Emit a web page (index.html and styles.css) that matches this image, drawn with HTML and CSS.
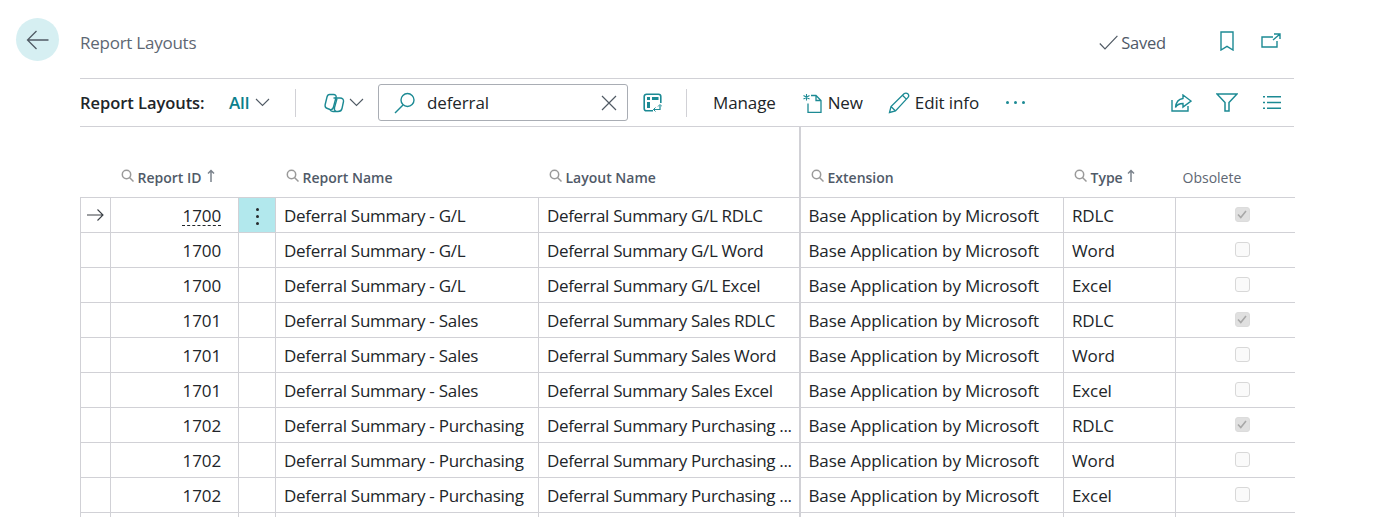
FILE: index.html
```html
<!DOCTYPE html>
<html lang="en">
<head>
<meta charset="utf-8">
<title>Report Layouts</title>
<link rel="stylesheet" href="styles.css">
</head>
<body>
<div class="page">
  <div class="back-col">
    <button class="back" aria-label="Back">
      <svg width="24" height="20" viewBox="0 0 24 20" fill="none" stroke="#505a64" stroke-width="1.3"><path d="M1.500 10H22.500M10.500 1 1.500 10l9 9"/></svg>
    </button>
  </div>
  <main class="main">
    <header class="title-bar">
      <div class="title">Report Layouts</div>
      <div class="status">
        <svg width="19" height="15" viewBox="0 0 19 15" fill="none" stroke="#505a64" stroke-width="1.200"><path d="M.8 8.500 6 13.800 18.400.8"/></svg>
        <span>Saved</span>
      </div>
      <svg class="bookmark" width="14" height="20" viewBox="0 0 14 20" fill="none" stroke="#1c8a94" stroke-width="1.400"><path d="M1 1h12v18l-6-3.600L1 19z"/></svg>
      <svg class="popout" width="20" height="15" viewBox="0 0 20 15" fill="none" stroke="#1c8a94" stroke-width="1.400"><path d="M12 4H1v10h15V8M13 1h6v5M19 1l-7 6"/></svg>
    </header>
    <div class="toolbar">
      <span class="view-label">Report Layouts:</span>
      <span class="view-all">All</span>
      <svg class="chev" width="15" height="9" viewBox="0 0 15 9" fill="none" stroke="#505a64" stroke-width="1.100"><path d="M1 1l6.500 6.500L14 1"/></svg>
      <span class="sep sep-a"></span>
      <svg class="copilot" width="21" height="20" viewBox="0 0 21 20" fill="none" stroke="#1c8a94" stroke-width="1.400"><path d="M5.500 1.500h4c2 0 3 1.200 2.500 3L9.500 14c-.5 2-1.500 3-3.500 2.500l-2.500-1C1.500 15 .8 13.500 1.200 11.500L3 4c.4-1.700 1.200-2.500 2.500-2.500z"/><path d="M9.500 5h6.500c2.500 0 3.800 1.500 3.500 3.500l-1.500 7c-.4 2-1.800 3-4 3H9c-1.500 0-2.500-.6-3-2"/><path d="M13 5.500l-2.500 9c-.4 1.500-.2 3 1.500 4"/></svg>
      <svg class="chev chev-b" width="15" height="9" viewBox="0 0 15 9" fill="none" stroke="#505a64" stroke-width="1.100"><path d="M1 1l6.500 6.500L14 1"/></svg>
      <div class="search">
        <svg class="search-ico" width="22" height="22" viewBox="0 0 22 22" fill="none" stroke="#1c8a94" stroke-width="1.400"><circle cx="13.500" cy="8" r="6.500"/><path d="M9 13 1 21"/></svg>
        <span class="search-text">deferral</span>
        <svg class="clear" width="16" height="16" viewBox="0 0 16 16" fill="none" stroke="#505a64" stroke-width="1.200"><path d="M1 1l14 14M15 1 1 15"/></svg>
      </div>
      <svg class="layout-ico" width="19" height="19" viewBox="0 0 19 19" fill="none" stroke="#1c8a94" stroke-width="1.600"><path d="M10 17.800H3.500a2.300 2.300 0 0 1-2.300-2.300v-12a2.300 2.300 0 0 1 2.300-2.300h12a2.300 2.300 0 0 1 2.300 2.300V10"/><path d="M4 4h3v3H4zM9 4h6.500v3H9zM4 9h3v6H4z" fill="#1c8a94" stroke="none"/><path d="M10.500 16.500h6.500v-4" stroke-width="1.200"/><path d="M12.500 14.500l-2 2 2 2M15 13.500l2-2 2 2" stroke-width="1"/></svg>
      <span class="sep sep-b"></span>
      <span class="action act-manage">Manage</span>
      <span class="action act-new">
        <svg width="20" height="20" viewBox="0 0 20 20" fill="none" stroke="#1c8a94" stroke-width="1.300"><path d="M9 2.500h5l5 5v12H6v-9M14 2.500v5h5"/><path d="M4.500 1v6.500M1.500 2.500l6 3.500M7.500 2.500l-6 3.500" stroke-width="1.100"/></svg>
        New
      </span>
      <span class="action act-edit">
        <svg width="22" height="22" viewBox="0 0 22 22" fill="none" stroke="#1c8a94" stroke-width="1.300"><path d="M1.500 20.500l1.500-6L16 1.800c1-1 2.800-1 3.800 0s1 2.800 0 3.800L7.500 19zM3 14.500l4.500 4.500M14.500 3.300l4.300 4.300"/></svg>
        Edit info
      </span>
      <span class="more"><i></i><i></i><i></i></span>
      <span class="tool-right">
        <svg class="share" width="21" height="18" viewBox="0 0 21 18" fill="none" stroke="#1c8a94" stroke-width="1.400"><path d="M1 6v11h16v-5"/><path d="M12 1l8 6-8 6V9.500c-3.500 0-6 1-7.500 4C5 8 8 5 12 4.500z"/></svg>
        <svg width="22" height="19" viewBox="0 0 22 19" fill="none" stroke="#1c8a94" stroke-width="1.500"><path d="M1 1h20l-8 8.500V18H9V9.500z"/></svg>
        <svg width="18" height="13" viewBox="0 0 18 13" fill="none" stroke="#1c8a94" stroke-width="1.500"><path d="M0 .8h2M4 .8h14M0 6.500h2M4 6.500h14M0 12.200h2M4 12.200h14"/></svg>
      </span>
    </div>
    <table class="grid">
      <colgroup>
        <col class="c-ind"><col class="c-id"><col class="c-menu"><col class="c-name"><col class="c-layout"><col class="c-ext"><col class="c-type"><col class="c-obs">
      </colgroup>
      <thead>
        <tr>
          <th></th>
          <th><span class="th-in"><svg class="mag" viewBox="0 0 13 13" width="13" height="13" fill="none" stroke="#9a9a9a" stroke-width="1.500"><circle cx="5.500" cy="5.500" r="4.200"/><path d="M8.500 8.500 12.500 12.500"/></svg>Report ID<svg class="arrow arrow-id" width="8" height="13" viewBox="0 0 8 13" fill="none" stroke="#7b838c" stroke-width="1.500"><path d="M4 13V1.500M1 4.500l3-3 3 3"/></svg></span></th>
          <th></th>
          <th><span class="th-in"><svg class="mag" viewBox="0 0 13 13" width="13" height="13" fill="none" stroke="#9a9a9a" stroke-width="1.500"><circle cx="5.500" cy="5.500" r="4.200"/><path d="M8.500 8.500 12.500 12.500"/></svg>Report Name</span></th>
          <th><span class="th-in"><svg class="mag" viewBox="0 0 13 13" width="13" height="13" fill="none" stroke="#9a9a9a" stroke-width="1.500"><circle cx="5.500" cy="5.500" r="4.200"/><path d="M8.500 8.500 12.500 12.500"/></svg>Layout Name</span></th>
          <th class="frozen"><span class="th-in"><svg class="mag" viewBox="0 0 13 13" width="13" height="13" fill="none" stroke="#9a9a9a" stroke-width="1.500"><circle cx="5.500" cy="5.500" r="4.200"/><path d="M8.500 8.500 12.500 12.500"/></svg>Extension</span></th>
          <th><span class="th-in"><svg class="mag" viewBox="0 0 13 13" width="13" height="13" fill="none" stroke="#9a9a9a" stroke-width="1.500"><circle cx="5.500" cy="5.500" r="4.200"/><path d="M8.500 8.500 12.500 12.500"/></svg>Type<svg class="arrow" width="8" height="13" viewBox="0 0 8 13" fill="none" stroke="#7b838c" stroke-width="1.500"><path d="M4 13V1.500M1 4.500l3-3 3 3"/></svg></span></th>
          <th class="th-obs">Obsolete</th>
        </tr>
      </thead>
      <tbody>
        <tr class="current"><td class="ind"><svg width="17" height="12" viewBox="0 0 17 12" fill="none" stroke="#3a3f45" stroke-width="1.100"><path d="M0 6h16M10.500.5 16 6l-5.500 5.500"/></svg></td><td class="num"><span class="link">1700</span></td><td class="menu"><span class="dots"><i></i><i></i><i></i></span></td><td class="name">Deferral Summary - G/L</td><td class="layout">Deferral Summary G/L RDLC</td><td class="frozen">Base Application by Microsoft</td><td>RDLC</td><td class="obs"><span class="check on"><svg width="10" height="9" viewBox="0 0 10 9" fill="none" stroke="#a8a8a8" stroke-width="1.600"><path d="M1 4.500 3.800 7.500 9 1"/></svg></span></td></tr>
        <tr><td></td><td class="num">1700</td><td></td><td class="name">Deferral Summary - G/L</td><td class="layout">Deferral Summary G/L Word</td><td class="frozen">Base Application by Microsoft</td><td>Word</td><td class="obs"><span class="check"></span></td></tr>
        <tr><td></td><td class="num">1700</td><td></td><td class="name">Deferral Summary - G/L</td><td class="layout">Deferral Summary G/L Excel</td><td class="frozen">Base Application by Microsoft</td><td>Excel</td><td class="obs"><span class="check"></span></td></tr>
        <tr><td></td><td class="num">1701</td><td></td><td class="name">Deferral Summary - Sales</td><td class="layout">Deferral Summary Sales RDLC</td><td class="frozen">Base Application by Microsoft</td><td>RDLC</td><td class="obs"><span class="check on"><svg width="10" height="9" viewBox="0 0 10 9" fill="none" stroke="#a8a8a8" stroke-width="1.600"><path d="M1 4.500 3.800 7.500 9 1"/></svg></span></td></tr>
        <tr><td></td><td class="num">1701</td><td></td><td class="name">Deferral Summary - Sales</td><td class="layout">Deferral Summary Sales Word</td><td class="frozen">Base Application by Microsoft</td><td>Word</td><td class="obs"><span class="check"></span></td></tr>
        <tr><td></td><td class="num">1701</td><td></td><td class="name">Deferral Summary - Sales</td><td class="layout">Deferral Summary Sales Excel</td><td class="frozen">Base Application by Microsoft</td><td>Excel</td><td class="obs"><span class="check"></span></td></tr>
        <tr><td></td><td class="num">1702</td><td></td><td class="name">Deferral Summary - Purchasing</td><td class="layout">Deferral Summary Purchasing ...</td><td class="frozen">Base Application by Microsoft</td><td>RDLC</td><td class="obs"><span class="check on"><svg width="10" height="9" viewBox="0 0 10 9" fill="none" stroke="#a8a8a8" stroke-width="1.600"><path d="M1 4.500 3.800 7.500 9 1"/></svg></span></td></tr>
        <tr><td></td><td class="num">1702</td><td></td><td class="name">Deferral Summary - Purchasing</td><td class="layout">Deferral Summary Purchasing ...</td><td class="frozen">Base Application by Microsoft</td><td>Word</td><td class="obs"><span class="check"></span></td></tr>
        <tr><td></td><td class="num">1702</td><td></td><td class="name">Deferral Summary - Purchasing</td><td class="layout">Deferral Summary Purchasing ...</td><td class="frozen">Base Application by Microsoft</td><td>Excel</td><td class="obs"><span class="check"></span></td></tr>
        <tr><td></td><td></td><td></td><td></td><td></td><td class="frozen"></td><td></td><td class="obs"></td></tr>
      </tbody>
    </table>
  </main>
</div>
</body>
</html>
```
FILE: styles.css
```css
* { box-sizing: border-box; }
html, body { margin: 0; height: 100%; overflow: hidden; background: #fff; }
body { font-family: "Open Sans", "Noto Sans", sans-serif; color: #212529; font-size: 16px; }
.page { display: flex; height: 517px; overflow: hidden; }
.back-col { width: 80px; padding: 18px 0 0 16px; flex: none; }
.back { width: 43px; height: 43px; border: 0; border-radius: 50%; background: #d6eff2; display: flex; align-items: center; justify-content: center; padding: 0; }
.main { width: 1214px; flex: none; }

.title-bar { height: 79px; border-bottom: 1px solid #d1d1d6; display: flex; align-items: center; padding-top: 7px; }
.title { font-size: 17px; color: #5e6773; letter-spacing: -.25px; }
.status { margin-left: auto; display: flex; align-items: center; gap: 3px; color: #505a68; font-size: 16.500px; letter-spacing: -.2px; }
.status svg { margin-left: -2px; }
.bookmark { margin-left: 54px; margin-top: -4px; }
.popout { margin-left: 27px; margin-right: 13px; margin-top: -4px; }

.toolbar { height: 48px; border-bottom: 1px solid #d1d1d6; display: flex; align-items: center; font-size: 17px; letter-spacing: -.12px; }
.view-label { font-weight: 600; font-size: 16.500px; letter-spacing: -.05px; width: 124px; flex: none; white-space: nowrap; }
.view-all { color: #0b7f8c; font-weight: 600; margin-left: 25px; width: 22px; flex: none; }
.chev { margin-left: 4px; flex: none; }
.sep { width: 1px; height: 28px; background: #d1d1d6; flex: none; }
.sep-a { margin-left: 25px; }
.copilot { margin-left: 28px; flex: none; }
.chev-b { margin-left: 4px; }
.search { width: 250px; height: 37px; border: 1px solid #a9adb4; border-radius: 3px; margin-left: 14px; display: flex; align-items: center; padding: 0 10px 0 15px; flex: none; }
.search-ico { flex: none; }
.search-text { margin-left: 11px; flex: 1; }
.clear { flex: none; }
.layout-ico { margin-left: 15px; flex: none; }
.sep-b { margin-left: 24px; }
.action { display: inline-flex; align-items: center; gap: 5px; }
.act-manage { margin-left: 26px; }
.act-new { margin-left: 26px; gap: 6px; }
.act-edit { margin-left: 25px; gap: 5px; }
.more { display: inline-flex; gap: 5px; margin-left: 27px; }
.more i { width: 3px; height: 3px; border-radius: 50%; background: #1c8a94; }
.tool-right { margin-left: auto; display: flex; align-items: center; gap: 25px; margin-right: 13px; }
.share { margin-right: -1px; }

.grid { border-collapse: collapse; table-layout: fixed; width: 1214px; margin-top: 0; }
.c-ind { width: 30px; }
.c-id { width: 128px; }
.c-menu { width: 37px; }
.c-name { width: 263px; }
.c-layout { width: 261px; }
.c-ext { width: 264px; }
.c-type { width: 112px; }
.c-obs { width: 119px; }
th { height: 70px; border-bottom: 1px solid #d1d1d6; text-align: left; vertical-align: bottom; padding: 0 0 10px 10px; font-weight: 600; font-size: 14px; color: #505a68; white-space: nowrap; }
th.th-obs { font-weight: 400; padding-left: 7px; color: #5e6773; }
.th-in { display: inline-flex; align-items: center; gap: 3px; }
.mag { flex: none; margin-top: -3px; margin-right: 1px; }
.arrow { margin-left: 1px; margin-top: -3px; flex: none; }
.arrow-id { margin-left: 2px; }
td { height: 35px; padding: 1px 8px 0; border-bottom: 1px solid #d1d1d6; border-left: 1px solid #d1d1d6; font-size: 17px; letter-spacing: -.12px; white-space: nowrap; }
td.name { letter-spacing: -.26px; }
td.layout { letter-spacing: -.34px; }
th.frozen, td.frozen { border-left: 2px solid #d1d1d6; }
.num { text-align: right; padding-right: 17px; }
.ind { text-align: center; padding: 0; line-height: 0; }
.menu { background: #b2e8ed; text-align: center; padding: 0; }
.link { text-decoration: underline dashed 1px; text-underline-offset: 3px; }
.dots { display: inline-flex; flex-direction: column; gap: 4px; vertical-align: middle; }
.dots i { width: 3px; height: 3px; background: #26292c; border-radius: 50%; }
.obs { text-align: center; padding: 0 0 0 14px; line-height: 0; }
.check { display: inline-flex; width: 15px; height: 15px; border: 1px solid #d8d8d8; border-radius: 3px; background: #fafafa; align-items: center; justify-content: center; }
.check.on { background: #e0e0e0; border-color: #dcdcdc; }
```
